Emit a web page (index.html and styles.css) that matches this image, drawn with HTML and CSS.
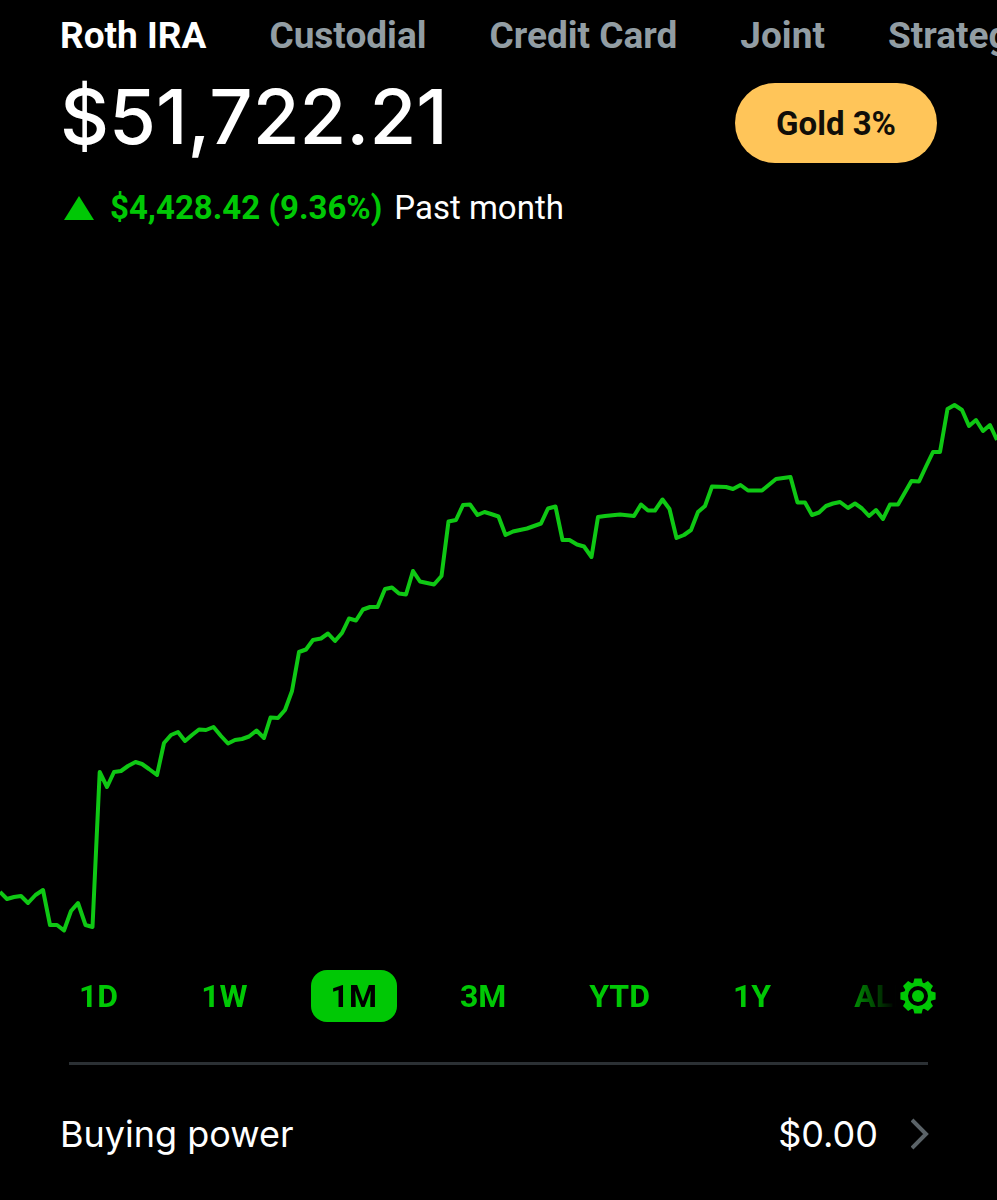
FILE: index.html
```
<!DOCTYPE html>
<html lang="en">
<head>
    <meta charset="UTF-8">
    <meta name="viewport" content="width=device-width, initial-scale=1.0">
    <title>Roth IRA</title>
    <link rel="stylesheet" href="styles.css">
</head>
<body>
    <nav class="accounts">
        <a href="#" class="account active">Roth IRA</a>
        <a href="#" class="account">Custodial</a>
        <a href="#" class="account">Credit Card</a>
        <a href="#" class="account">Joint</a>
        <a href="#" class="account">Strategies</a>
    </nav>

    <main>
        <header class="summary">
            <h1 class="balance">$51,722.21</h1>
            <button type="button" class="gold">Gold 3%</button>
        </header>

        <p class="change">
            <svg class="arrow" viewBox="0 0 30 24" aria-hidden="true"><path d="M15 0L30 24H0Z"/></svg>
            <strong>$4,428.42 (9.36%)</strong>
            <span>Past month</span>
        </p>

        <svg class="chart" viewBox="0 380 997 570" role="img" aria-label="Portfolio value, past month">
            <polyline points="0,892 7,899 14,897 21,896 28,903 35.5,895 43,890 50,925 57,925 64,930.5 71,911 78,903 85.5,925 92.5,927 99.7,772 107,787 114,772 121,771 128,766 135.5,762 142,764 149,769 157,775 164,743 171,735 178,732 185,741 192,735 199,729.5 206,730 213.5,727 221,736 228,743.5 235,740 242,739 249,736.5 256.5,730.5 264,738 270.5,717.5 278,718 285,710 292,691 299,652 306,649.5 313,640 321,638.5 328,633.5 335,641 342,633 349,618.5 356,620.5 363,609.5 370,607 377.5,607 385,589 392,587.5 399,593.5 406,594.5 413,571 420,581.5 427,583 434,584.5 441.5,576 448.5,521.5 456,520 463,505 470,504.5 477.5,515 484.5,512 491,514 498.5,516.5 505.5,535 513,531.5 527,528.5 541,523.5 548,508.5 555.5,506.5 562.5,540 569.5,540 577,544.5 584,546.5 591.5,557 598,517 605,516 620,514.5 634,516 641,504.5 648,510.5 655,510.5 662.5,499.5 669.5,509 676.5,538 684,535 691,530 698,512 705,506 712,486.5 726,487 733,489 740.5,485 748,490.5 762,490.5 776,479 790.5,477 797.5,502.5 805,502.5 812,515 819,512.5 826,506 833,503.5 840,502 848,508 855,503.5 862,508.5 869,516 876,510 883,519 890,504.5 898,504.5 911.5,481 919,481.5 926,466.5 933,452 940,452 947.5,409 954.5,405 962,410 969,426 976,420 983,431 990,425 997,440"/>
        </svg>

        <div class="ranges">
            <div class="range-list">
                <button type="button" class="range">1D</button>
                <button type="button" class="range">1W</button>
                <button type="button" class="range selected">1M</button>
                <button type="button" class="range">3M</button>
                <button type="button" class="range">YTD</button>
                <button type="button" class="range">1Y</button>
                <button type="button" class="range">ALL</button>
            </div>
            <button type="button" class="settings" aria-label="Chart settings">
                <svg viewBox="-18 -18 36 36" aria-hidden="true">
                    <circle r="12" fill="none" stroke="currentColor" stroke-width="4"/>
                    <circle r="6"/>
                    <path id="tooth" d="M-5 -12L-3.6 -17.6H3.6L5 -12Z"/>
                    <use href="#tooth" transform="rotate(45)"/>
                    <use href="#tooth" transform="rotate(90)"/>
                    <use href="#tooth" transform="rotate(135)"/>
                    <use href="#tooth" transform="rotate(180)"/>
                    <use href="#tooth" transform="rotate(225)"/>
                    <use href="#tooth" transform="rotate(270)"/>
                    <use href="#tooth" transform="rotate(315)"/>
                </svg>
            </button>
        </div>

        <hr class="divider">

        <a href="#" class="row">
            <span>Buying power</span>
            <span class="amount">$0.00</span>
            <svg class="chevron" viewBox="0 0 18 32" aria-hidden="true"><path d="M1 2L15 16L1 30"/></svg>
        </a>
    </main>
</body>
</html>
```
FILE: styles.css
```
* {
    margin: 0;
    padding: 0;
    box-sizing: border-box;
}

body {
    font-family: 'Roboto', 'Inter', sans-serif;
    background: #000;
    color: #fff;
    overflow-x: hidden;
}

button {
    font-family: inherit;
    border: none;
    background: none;
    cursor: pointer;
}

a {
    color: inherit;
    text-decoration: none;
}

/* Account tabs */
.accounts {
    display: flex;
    gap: 63px;
    padding: 13px 0 0 60px;
    overflow: hidden;
    white-space: nowrap;
}

.account {
    font-size: 37px;
    line-height: 46px;
    font-weight: 700;
    color: #929da3;
}

.account.active {
    color: #fff;
}

/* Balance */
.summary {
    display: flex;
    justify-content: space-between;
    align-items: flex-start;
    padding: 24px 60px 0;
}

.balance {
    font-family: 'Inter', 'Roboto', sans-serif;
    font-size: 76px;
    line-height: 66px;
    font-weight: 500;
}

.gold {
    height: 80px;
    padding: 0 41px;
    border-radius: 40px;
    background: #ffc559;
    color: #110e08;
    font-size: 33px;
    font-weight: 700;
}

.change {
    display: flex;
    align-items: center;
    gap: 12px;
    padding: 25px 64px 0;
    font-size: 33px;
    line-height: 40px;
}

.change strong {
    font-weight: 700;
    color: #00c805;
}

.arrow {
    width: 30px;
    height: 24px;
    margin-right: 4px;
    fill: #00c805;
}

/* Chart */
.chart {
    display: block;
    width: 100%;
    margin-top: 152px;
}

.chart polyline {
    fill: none;
    stroke: #0fc814;
    stroke-width: 4;
    stroke-linejoin: round;
}

/* Time ranges */
.ranges {
    display: flex;
    align-items: center;
    gap: 4px;
    padding: 20px 61px 0 59px;
}

.range-list {
    display: flex;
    flex: 1;
    gap: 43px;
    min-width: 0;
    overflow: hidden;
    mask-image: linear-gradient(to right, #000 calc(100% - 60px), transparent);
}

.range {
    flex: none;
    height: 52px;
    padding: 0 20px;
    border-radius: 16px;
    color: #00c805;
    font-size: 32px;
    font-weight: 700;
}

.range.selected {
    background: #00c805;
    color: #000;
}

.settings {
    flex: none;
    width: 36px;
    height: 36px;
    color: #00c805;
}

.settings svg {
    display: block;
    fill: currentColor;
}

.divider {
    height: 3px;
    margin: 40px 69px 0;
    border: none;
    background: #2b3034;
}

/* Buying power */
.row {
    display: flex;
    align-items: center;
    padding: 45px 68px 42px 60px;
    font-family: 'Inter', 'Roboto', sans-serif;
    font-size: 36px;
    line-height: 48px;
}

.amount {
    margin-left: auto;
}

.chevron {
    width: 18px;
    height: 32px;
    margin-left: 33px;
    fill: none;
    stroke: #5b6368;
    stroke-width: 4;
}
```
